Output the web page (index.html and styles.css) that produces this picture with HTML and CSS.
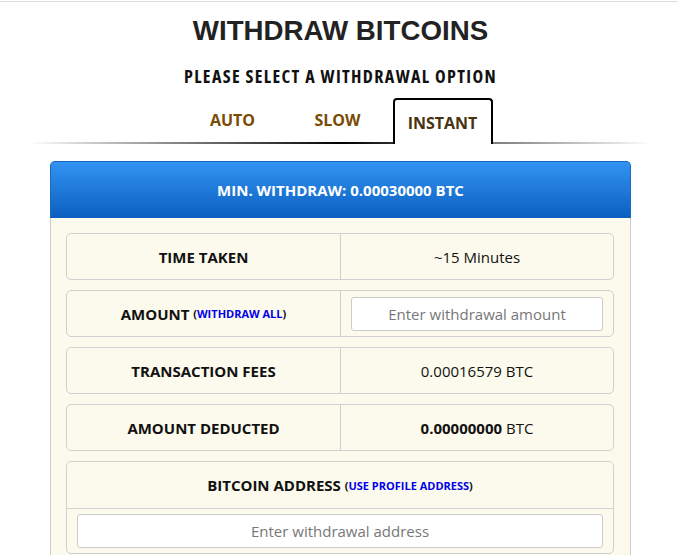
FILE: index.html
```html
<!DOCTYPE html>
<html lang="en">
<head>
    <meta charset="UTF-8">
    <meta name="viewport" content="width=device-width, initial-scale=1.0">
    <title>Withdraw Bitcoins</title>
    <link rel="stylesheet" href="styles.css">
</head>
<body>
    <div class="page">
        <h1 class="title">WITHDRAW BITCOINS</h1>
        <h2 class="subtitle">PLEASE SELECT A WITHDRAWAL OPTION</h2>

        <div class="tabs">
            <div class="tab">AUTO</div>
            <div class="tab">SLOW</div>
            <div class="tab active">INSTANT</div>
        </div>

        <div class="panel">
            <div class="panel-head">MIN. WITHDRAW: 0.00030000 BTC</div>
            <div class="panel-body">
                <div class="row">
                    <div class="cell label">TIME TAKEN</div>
                    <div class="cell">~15 Minutes</div>
                </div>
                <div class="row">
                    <div class="cell label">AMOUNT&nbsp;<span class="small">(<a href="#">WITHDRAW ALL</a>)</span></div>
                    <div class="cell field">
                        <input type="text" class="input" placeholder="Enter withdrawal amount">
                    </div>
                </div>
                <div class="row">
                    <div class="cell label">TRANSACTION FEES</div>
                    <div class="cell">0.00016579 BTC</div>
                </div>
                <div class="row">
                    <div class="cell label">AMOUNT DEDUCTED</div>
                    <div class="cell"><b>0.00000000</b>&nbsp;BTC</div>
                </div>
                <div class="row block">
                    <div class="block-head label">BITCOIN ADDRESS&nbsp;<span class="small">(<a href="#">USE PROFILE ADDRESS</a>)</span></div>
                    <div class="block-field">
                        <input type="text" class="input" placeholder="Enter withdrawal address">
                    </div>
                </div>
            </div>
        </div>
    </div>
</body>
</html>
```

FILE: styles.css
```css
body {
    margin: 0;
    background-color: #fff;
    font-family: "Open Sans", Arial, sans-serif;
    color: #111;
}
.page {
    margin-top: 1px;
    border-top: 1px solid #ddd;
    padding-left: 3px;
}
.title {
    font-family: "Liberation Sans", Arial, sans-serif;
    font-size: 27.7px;
    font-weight: bold;
    color: #222;
    text-align: center;
    line-height: 32px;
    margin: 13px 0 0;
}
.subtitle {
    font-size: 18px;
    font-weight: bold;
    font-stretch: 75%;
    letter-spacing: 1.35px;
    text-align: center;
    color: #111;
    line-height: 24px;
    margin: 17px 0 0;
}
.tabs {
    display: flex;
    justify-content: center;
    align-items: flex-end;
    gap: 5px;
    margin: 10px 25px 0;
    padding-right: 6px;
    height: 46px;
    position: relative;
}
.tabs::after {
    content: "";
    position: absolute;
    left: 0;
    right: 0;
    bottom: 0;
    height: 2px;
    background: linear-gradient(to right, rgba(0,0,0,0), #000 50%, rgba(0,0,0,0));
}
.tab {
    width: 100px;
    text-align: center;
    font-size: 16px;
    font-weight: bold;
    color: #7a4b05;
    line-height: 22px;
    padding: 12px 0 13px;
}
.tab.active {
    box-sizing: border-box;
    height: 46px;
    padding-top: 12px;
    border: 2px solid #000;
    border-bottom: none;
    border-radius: 4px 4px 0 0;
    background-color: #fff;
    color: #4a3310;
    position: relative;
    z-index: 1;
}
.panel {
    width: 581px;
    margin: 17px auto 0;
}
.panel-head {
    height: 57px;
    line-height: 57px;
    text-align: center;
    color: #fff;
    font-size: 15px;
    font-weight: bold;
    background: linear-gradient(#3393f2, #0a5fbf);
    border: 1px solid #1a68c0;
    border-bottom: none;
    border-radius: 5px 5px 0 0;
    box-sizing: border-box;
}
.panel-body {
    background-color: #fcfaec;
    border-left: 1px solid #ccc;
    border-right: 1px solid #ccc;
    padding: 15px 16px 15px 15px;
    display: flex;
    flex-direction: column;
    gap: 10px;
}
.row {
    display: flex;
    border: 1px solid #d0d0d0;
    border-radius: 5px;
    height: 47px;
    box-sizing: border-box;
}
.cell {
    width: 50%;
    box-sizing: border-box;
    display: flex;
    justify-content: center;
    align-items: center;
    font-size: 15px;
}
.cell + .cell {
    border-left: 1px solid #d0d0d0;
}
.label {
    font-weight: bold;
}
.small {
    font-size: 11px;
    font-weight: bold;
}
.small a {
    color: #0000ee;
    text-decoration: none;
}
.field {
    padding: 0 10px;
}
.input {
    width: 100%;
    height: 34px;
    box-sizing: border-box;
    border: 1px solid #ccc;
    border-radius: 3px;
    background-color: #fff;
    font-family: "Open Sans", Arial, sans-serif;
    font-size: 15px;
    text-align: center;
    color: #333;
}
.input::placeholder {
    color: #777;
}
.row.block {
    flex-direction: column;
    height: auto;
}
.block-head {
    height: 46px;
    display: flex;
    justify-content: center;
    align-items: center;
    font-size: 15px;
    border-bottom: 1px solid #d0d0d0;
}
.block-field {
    padding: 5px 10px;
}
```
